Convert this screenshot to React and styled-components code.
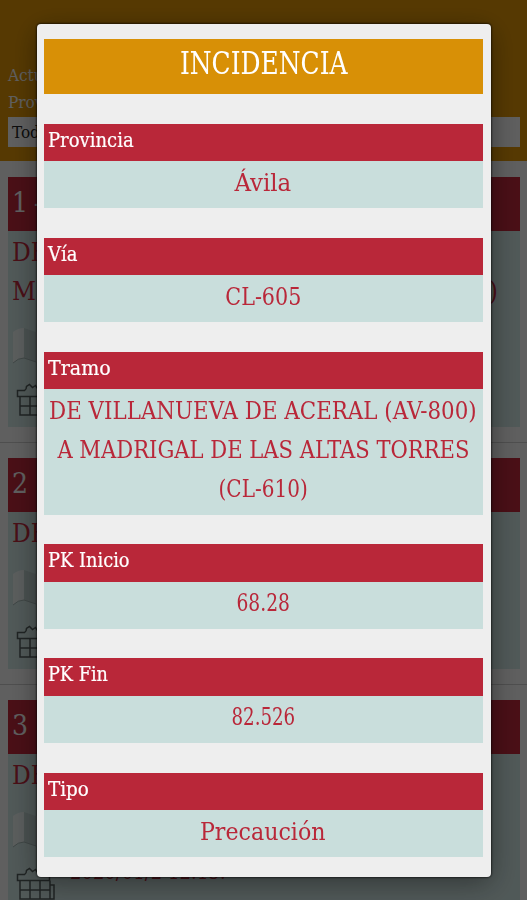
import React from "react";
import styled, { createGlobalStyle } from "styled-components";

const GlobalStyle = createGlobalStyle`
  * {
    box-sizing: border-box;
  }

  body {
    margin: 0;
    background: #eee;
    font-family: "DejaVu Serif Condensed", "DejaVu Serif", serif;
    font-stretch: condensed;
  }
`;

const Page = styled.div`
  height: 900px;
  overflow: hidden;
`;

const TopBar = styled.header`
  height: 161px;
  padding: 62px 7px 0 8px;
  background: #d89006;
  color: #eee;
  font-size: 17px;
  line-height: 27px;
`;

const Select = styled.div`
  height: 30px;
  margin-top: 1px;
  padding-left: 4px;
  background: #eee;
  color: #222;
  line-height: 30px;
`;

const Item = styled.article`
  height: ${props => props.height}px;
  margin: 0 7px 0 8px;
  background: #c9dedc;
`;

const ItemTitle = styled.div`
  height: 54px;
  padding-left: 4px;
  background: #b92739;
  color: #eee;
  font-size: 28px;
  line-height: 51px;
  word-spacing: -2px;
`;

const ItemRoad = styled.div`
  display: flex;
  justify-content: space-between;
  height: 39px;
  padding: 0 22px 0 4px;
  color: #b92739;
  font-size: 26px;
  line-height: 42px;
`;

const ItemRow = styled.div`
  display: flex;
  align-items: center;
  height: 55px;
  padding-left: 4px;
`;

const ItemDate = styled.span`
  margin: -8px 0 0 10px;
  color: #b92739;
  font-size: 20px;
`;

const Divider = styled.div`
  height: 1px;
  margin: 15px 0;
  background: #c4c4c4;
`;

const Gap = styled.div`
  height: 16px;
`;

const Overlay = styled.div`
  position: fixed;
  inset: 0;
  display: flex;
  align-items: flex-start;
  padding: 23.5px 36px 0 36.5px;
  background: rgba(0, 0, 0, .6);
`;

const Modal = styled.section`
  flex: 1;
  min-width: 0;
  height: 853.5px;
  padding: 15.5px 8.5px 0 7.5px;
  border-radius: 4px;
  background: #eee;
  box-shadow: 0 0 2px 1px rgba(0, 0, 0, .55), 0 6px 28px rgba(0, 0, 0, .4);
`;

const ModalTitle = styled.h1`
  height: 54.5px;
  margin: 0 0 30px;
  background: #d89006;
  color: #fff;
  font-size: 32px;
  font-weight: 400;
  line-height: 49px;
  text-align: center;
`;

const Field = styled.div`
  margin-bottom: 29.6px;
`;

const Label = styled.div`
  height: 37.5px;
  padding-left: 4px;
  background: #b92739;
  color: #fff;
  font-size: 20px;
  line-height: 33px;
  -webkit-text-stroke: .2px #fff;
`;

const Value = styled.div`
  padding: 1.5px 0 6.5px;
  background: #c9dedc;
  color: #b92739;
  font-size: 25px;
  line-height: 39.1px;
`;

const Line = styled.div`
  display: flex;
  justify-content: center;
`;

const Text = styled.span`
  display: inline-block;
  flex-shrink: 0;
  white-space: nowrap;
  transform: scaleX(${props => props.$stretch || 1});
  transform-origin: ${props => props.$origin || "center"};
`;

const MapSvg = styled.svg`
  margin-top: 17px;
`;

const MapIcon = () => (
  <MapSvg width="48" height="38" viewBox="0 0 48 38">
    <path d="M1 6Q6 2 12 2v30Q6 32 1 37z" fill="#e2eae9" />
    <path d="M12 2l12 4v30l-12-4z" fill="#b9cbc9" />
    <path d="M24 6l12-4v30l-12 4z" fill="#e2eae9" />
    <path d="M1 37Q6 32 12 32l12 4" fill="none" stroke="#9fb0ae" />
  </MapSvg>
);

const GiftSvg = styled.svg`
  margin: 19px 0 0 4px;
`;

const GiftIcon = () => (
  <GiftSvg width="44" height="36" viewBox="0 0 44 36" fill="none" stroke="#505a59" strokeWidth="1.5">
    <path d="M1.500 7.500h7q2-1 2-4l3-2 3 3 3-2q2 4 5 5h9v6h-32zM4 13.500v18.500h30v-18.500M14 13.500v18.500M24 13.500v18.500M4 23h30M34 18h4v14h-4" />
  </GiftSvg>
);

const fields = [
  { label: "Provincia", fit: 1, lines: [["Ávila", 1.02]] },
  { label: "Vía", fit: 1, lines: [["CL-605", 0.92]] },
  {
    label: "Tramo",
    fit: 1.06,
    lines: [
      ["DE VILLANUEVA DE ACERAL (AV-800)", 0.951],
      ["A MADRIGAL DE LAS ALTAS TORRES", 0.939],
      ["(CL-610)", 0.89],
    ],
  },
  { label: "PK Inicio", fit: 0.99, lines: [["68.28", 0.83]] },
  { label: "PK Fin", fit: 0.98, lines: [["82.526", 0.81]] },
  { label: "Tipo", fit: 1.02, lines: [["Precaución", 0.985]] },
];

const App = () => (
  <Page>
    <GlobalStyle />
    <TopBar>
      <div>Actu</div>
      <div>Prov</div>
      <Select>Toda</Select>
    </TopBar>
    <Gap />
    <Item height={250}>
      <ItemTitle>1 -</ItemTitle>
      <ItemRoad>DE</ItemRoad>
      <ItemRoad><span>M</span><span>)</span></ItemRoad>
      <ItemRow><MapIcon /></ItemRow>
      <ItemRow><GiftIcon /></ItemRow>
    </Item>
    <Divider />
    <Item height={211}>
      <ItemTitle>2</ItemTitle>
      <ItemRoad>DE</ItemRoad>
      <ItemRow><MapIcon /></ItemRow>
      <ItemRow><GiftIcon /></ItemRow>
    </Item>
    <Divider />
    <Item height={220}>
      <ItemTitle>3</ItemTitle>
      <ItemRoad>DE</ItemRoad>
      <ItemRow><MapIcon /></ItemRow>
      <ItemRow>
        <GiftIcon />
        <ItemDate>2020/01/2 12:15:</ItemDate>
      </ItemRow>
    </Item>
    <Overlay>
      <Modal>
        <ModalTitle><Text $stretch={0.866}>INCIDENCIA</Text></ModalTitle>
        {fields.map(({ label, fit, lines }) => (
          <Field key={label}>
            <Label><Text $stretch={fit} $origin="left">{label}</Text></Label>
            <Value>
              {lines.map(([text, stretch]) => (
                <Line key={text}><Text $stretch={stretch}>{text}</Text></Line>
              ))}
            </Value>
          </Field>
        ))}
      </Modal>
    </Overlay>
  </Page>
);

export default App;
